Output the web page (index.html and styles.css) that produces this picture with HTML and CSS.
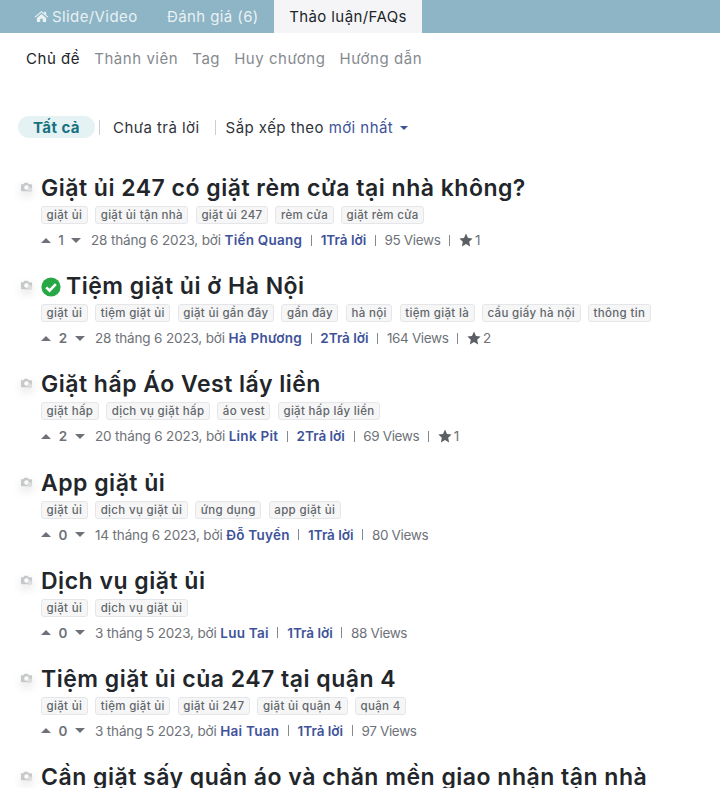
FILE: index.html
```html
<!DOCTYPE html>
<html lang="vi">
<head>
<meta charset="utf-8">
<title>Thảo luận</title>
<link rel="stylesheet" href="styles.css">
</head>
<body>
<svg class="defs" width="0" height="0" aria-hidden="true">
  <symbol id="cam" viewBox="0 0 14 14"><path d="M1 4.5h2.6L4.8 3h3.4l1.2 1.5H12a1 1 0 0 1 1 1V11a1 1 0 0 1-1 1H2a1 1 0 0 1-1-1z" fill="#c6c8ca"/><circle cx="7" cy="8" r="2.4" fill="#fff"/><circle cx="10.5" cy="10.5" r="2.6" fill="#dcdddf"/></symbol>
  <symbol id="star" viewBox="0 0 14 14"><path d="M7 .6l2 4.3 4.6.6-3.4 3.2.9 4.7L7 11.1l-4.1 2.3.9-4.7L.4 5.5 5 4.9z" fill="#5b5e63"/></symbol>
</svg>
<header class="tabs">
  <a class="tab tab-first"><svg class="home" viewBox="0 0 16 14"><path d="M8 1L.6 7.3l.8.9L8 2.7l6.6 5.5.8-.9L13 5.3V2h-2v1.6zM3 8.6V13h3.6V9.5h2.8V13H13V8.6L8 4.4z" fill="#e9f1f4"/></svg>Slide/Video</a>
  <a class="tab tab-second">Đánh giá (6)</a>
  <a class="tab tab-active">Thảo luận/FAQs</a>
</header>
<nav class="subnav">
  <a class="sub sub-on">Chủ đề</a>
  <a class="sub">Thành viên</a>
  <a class="sub">Tag</a>
  <a class="sub">Huy chương</a>
  <a class="sub">Hướng dẫn</a>
</nav>
<div class="filters">
  <a class="pill">Tất cả</a>
  <span class="bar"></span>
  <a class="flt">Chưa trả lời</a>
  <span class="bar bar-2"></span>
  <span class="flt">Sắp xếp theo <a class="sort">mới nhất</a><i class="caret"></i></span>
</div>
<main class="list">
  <article class="topic">
    <svg class="cam"><use href="#cam"/></svg>
    <h2 class="title">Giặt ủi 247 có giặt rèm cửa tại nhà không?</h2>
    <div class="tags"><span class="tag">giặt ủi</span><span class="tag">giặt ủi tận nhà</span><span class="tag">giặt ủi 247</span><span class="tag">rèm cửa</span><span class="tag">giặt rèm cửa</span></div>
    <div class="meta"><i class="up"></i><b class="n n-thin">1</b><i class="down"></i><span class="date">28 tháng 6 2023, bởi <a class="who">Tiến Quang</a></span><i class="sep"></i><a class="ans">1Trả lời</a><i class="sep"></i><span class="views">95 Views</span><i class="sep"></i><svg class="star"><use href="#star"/></svg><span class="fav">1</span></div>
  </article>
  <article class="topic">
    <svg class="cam"><use href="#cam"/></svg>
    <h2 class="title"><svg class="check" viewBox="0 0 20 20"><circle cx="10" cy="10" r="9.6" fill="#28a745"/><path d="M5.2 10.3l3.4 3.4 6.2-6.6" fill="none" stroke="#fff" stroke-width="2.6"/></svg>Tiệm giặt ủi ở Hà Nội</h2>
    <div class="tags"><span class="tag">giặt ủi</span><span class="tag">tiệm giặt ủi</span><span class="tag">giặt ủi gần đây</span><span class="tag">gần đây</span><span class="tag">hà nội</span><span class="tag">tiệm giặt là</span><span class="tag">cầu giấy hà nội</span><span class="tag">thông tin</span></div>
    <div class="meta"><i class="up"></i><b class="n">2</b><i class="down"></i><span class="date">28 tháng 6 2023, bởi <a class="who">Hà Phương</a></span><i class="sep"></i><a class="ans">2Trả lời</a><i class="sep"></i><span class="views">164 Views</span><i class="sep"></i><svg class="star"><use href="#star"/></svg><span class="fav">2</span></div>
  </article>
  <article class="topic">
    <svg class="cam"><use href="#cam"/></svg>
    <h2 class="title">Giặt hấp Áo Vest lấy liền</h2>
    <div class="tags"><span class="tag">giặt hấp</span><span class="tag">dịch vụ giặt hấp</span><span class="tag">áo vest</span><span class="tag">giặt hấp lấy liền</span></div>
    <div class="meta"><i class="up"></i><b class="n">2</b><i class="down"></i><span class="date">20 tháng 6 2023, bởi <a class="who">Link Pit</a></span><i class="sep"></i><a class="ans">2Trả lời</a><i class="sep"></i><span class="views">69 Views</span><i class="sep"></i><svg class="star"><use href="#star"/></svg><span class="fav">1</span></div>
  </article>
  <article class="topic">
    <svg class="cam"><use href="#cam"/></svg>
    <h2 class="title">App giặt ủi</h2>
    <div class="tags"><span class="tag">giặt ủi</span><span class="tag">dịch vụ giặt ủi</span><span class="tag">ứng dụng</span><span class="tag">app giặt ủi</span></div>
    <div class="meta"><i class="up"></i><b class="n">0</b><i class="down"></i><span class="date">14 tháng 6 2023, bởi <a class="who">Đỗ Tuyển</a></span><i class="sep"></i><a class="ans">1Trả lời</a><i class="sep"></i><span class="views">80 Views</span></div>
  </article>
  <article class="topic">
    <svg class="cam"><use href="#cam"/></svg>
    <h2 class="title">Dịch vụ giặt ủi</h2>
    <div class="tags"><span class="tag">giặt ủi</span><span class="tag">dịch vụ giặt ủi</span></div>
    <div class="meta"><i class="up"></i><b class="n">0</b><i class="down"></i><span class="date">3 tháng 5 2023, bởi <a class="who">Luu Tai</a></span><i class="sep"></i><a class="ans">1Trả lời</a><i class="sep"></i><span class="views">88 Views</span></div>
  </article>
  <article class="topic">
    <svg class="cam"><use href="#cam"/></svg>
    <h2 class="title">Tiệm giặt ủi của 247 tại quận 4</h2>
    <div class="tags"><span class="tag">giặt ủi</span><span class="tag">tiệm giặt ủi</span><span class="tag">giặt ủi 247</span><span class="tag">giặt ủi quận 4</span><span class="tag">quận 4</span></div>
    <div class="meta"><i class="up"></i><b class="n">0</b><i class="down"></i><span class="date">3 tháng 5 2023, bởi <a class="who">Hai Tuan</a></span><i class="sep"></i><a class="ans">1Trả lời</a><i class="sep"></i><span class="views">97 Views</span></div>
  </article>
  <article class="topic">
    <svg class="cam"><use href="#cam"/></svg>
    <h2 class="title">Cần giặt sấy quần áo và chăn mền giao nhận tận nhà</h2>
  </article>
</main>
</body>
</html>
```

FILE: styles.css
```css
html, body { margin: 0; padding: 0; }
html { height: 788px; overflow: hidden; }
body { height: 788px; overflow: hidden; background: #fff; font-family: "Inter", "Noto Sans", sans-serif; color: #212529; }
a { color: inherit; text-decoration: none; }
.defs { position: absolute; }

.tabs { display: flex; height: 33px; background: #8db5c5; padding-left: 34px; }
.tab { display: flex; align-items: center; font-size: 15px; letter-spacing: .4px; color: #e9f1f4; white-space: nowrap; }
.tab-first { width: 133px; }
.tab-second { width: 107px; }
.home { width: 15px; height: 13px; margin-right: 3px; }
.tab-active { width: 148px; justify-content: center; background: #f5f5f8; color: #212529; }

.subnav { display: flex; gap: 14px; padding: 16px 0 0 26px; height: 19px; font-size: 15px; letter-spacing: .55px; line-height: 19px; color: #868a8f; }
.sub { white-space: nowrap; }
.sub-on { color: #212529; }

.filters { display: flex; align-items: center; height: 22px; margin: 48px 0 0 18px; font-size: 15px; letter-spacing: .45px; color: #30343a; }
.pill { display: flex; align-items: center; justify-content: center; width: 77px; height: 22px; border-radius: 11px; background: #e4f2f4; color: #17707f; font-weight: 700; }
.bar { width: 1px; height: 15px; margin: 0 13px 0 4px; background: #c9ced6; }
.bar-2 { margin: 0 10px 0 15px; }
.flt { white-space: nowrap; }
.sort { color: #3e5299; }
.caret { display: inline-block; margin-left: 7px; vertical-align: 3px; border: 4px solid transparent; border-top-color: #3e5299; border-bottom: 0; }

.list { margin-top: 34px; padding-left: 41px; }
.topic { position: relative; height: 98.2px; }
.cam { position: absolute; left: -21px; top: 8px; width: 13px; height: 13px; filter: blur(.4px) drop-shadow(0 4px 5px rgba(0,0,0,.12)); }
.title { margin: 0; height: 32px; padding-bottom: 2px; font-size: 23px; letter-spacing: .5px; line-height: 32px; font-weight: 600; color: #22262b; white-space: nowrap; }
.check { width: 20px; height: 20px; margin-right: 5px; vertical-align: -3px; }
.tags { display: flex; gap: 7.5px; height: 18px; }
.tag { display: flex; align-items: center; height: 18px; box-sizing: border-box; padding: 0 4.5px; border: 1px solid #e4e6e9; border-radius: 3px; background: #f6f6f7; color: #62666b; font-size: 11.5px; letter-spacing: .33px; font-weight: 500; white-space: nowrap; }
.meta { display: flex; align-items: center; height: 18px; margin-top: 7px; font-size: 13.5px; color: #6e7278; white-space: nowrap; }
.up, .down { width: 0; height: 0; border: 5px solid transparent; }
.up { border-top: 0; border-bottom: 5px solid #6e7278; }
.down { border-bottom: 0; border-top: 5px solid #6e7278; }
.n { width: 24px; text-align: center; font-weight: 600; color: #6e7278; }
.n-thin { width: 20px; font-weight: 500; }
.date { margin-left: 10px; letter-spacing: -.15px; }
.who { color: #3e5299; font-weight: 600; letter-spacing: .25px; }
.ans { color: #3e5299; font-weight: 600; }
.views { letter-spacing: -.35px; }
.sep { width: 1px; height: 11px; margin: 0 8.7px; background: #85888d; }
.star { width: 14px; height: 14px; margin-right: 2px; }
```
